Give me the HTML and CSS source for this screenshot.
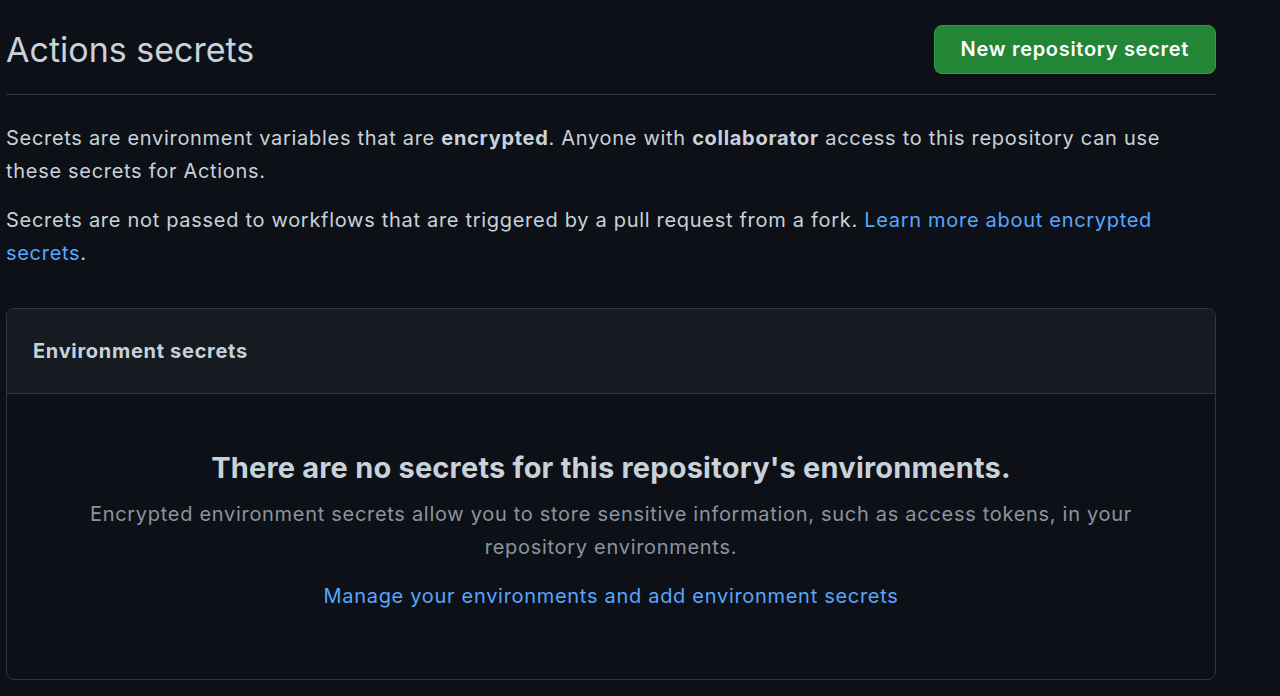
FILE: index.html
```html
<!DOCTYPE html>
<html>
<head>
  <link rel="stylesheet" href="styles.css">
</head>
<body>
  <div class="page">
    <!-- Page header -->
    <div class="subhead">
      <h2 class="subhead-heading">Actions secrets</h2>
      <a href="#" class="btn btn-primary">New repository secret</a>
    </div>

    <p>Secrets are environment variables that are <strong>encrypted</strong>. Anyone with <strong>collaborator</strong> access to this repository can use these secrets for Actions.</p>
    <p>Secrets are not passed to workflows that are triggered by a pull request from a fork. <a href="#" class="link">Learn more about encrypted secrets</a>.</p>

    <!-- Environment secrets box -->
    <div class="box">
      <div class="box-header">
        <h3 class="box-title">Environment secrets</h3>
      </div>
      <div class="blankslate">
        <h3 class="blankslate-heading">There are no secrets for this repository's environments.</h3>
        <p class="blankslate-text">Encrypted environment secrets allow you to store sensitive information, such as access tokens, in your repository environments.</p>
        <a href="#" class="link">Manage your environments and add environment secrets</a>
      </div>
    </div>
  </div>
</body>
</html>
```

FILE: styles.css
```css
body {
  margin: 0;
  background-color: #0d1117;
  color: #c9d1d9;
  font-family: Inter, 'Liberation Sans', Arial, sans-serif;
  font-size: 20px;
  line-height: 33px;
  letter-spacing: 0.7px;
}
.page {
  width: 1210px;
  padding-left: 6px;
}
.subhead {
  display: flex;
  justify-content: space-between;
  align-items: center;
  padding-top: 25px;
  padding-bottom: 20px;
  border-bottom: 1px solid #30363d;
  margin-bottom: 27px;
}
.subhead-heading {
  margin: 0;
  font-size: 34px;
  font-weight: 400;
  line-height: 48px;
  letter-spacing: 0;
  color: #c9d1d9;
}
.btn {
  display: inline-block;
  padding: 0 26px;
  height: 47px;
  line-height: 47px;
  border-radius: 8px;
  font-weight: 600;
  text-decoration: none;
}
.btn-primary {
  background-color: #238636;
  border: 1px solid #2ea043;
  color: #ffffff;
}
p {
  margin: 0 0 16px 0;
}
strong {
  font-weight: 700;
}
.link {
  color: #58a6ff;
  text-decoration: none;
}
.box {
  margin-top: 38px;
  border: 1px solid #30363d;
  border-radius: 8px;
}
.box-header {
  background-color: #161b22;
  border-bottom: 1px solid #30363d;
  border-radius: 8px 8px 0 0;
  padding: 0 26px;
  height: 84px;
  display: flex;
  align-items: center;
}
.box-title {
  margin: 0;
  font-size: 20px;
  font-weight: 700;
}
.blankslate {
  text-align: center;
  padding: 54px 70px 66px;
}
.blankslate-heading {
  margin: 0 0 10px 0;
  font-size: 29px;
  font-weight: 700;
  line-height: 40px;
  letter-spacing: 0.2px;
}
.blankslate-text {
  color: #8b949e;
  margin: 0 0 16px 0;
}
```
